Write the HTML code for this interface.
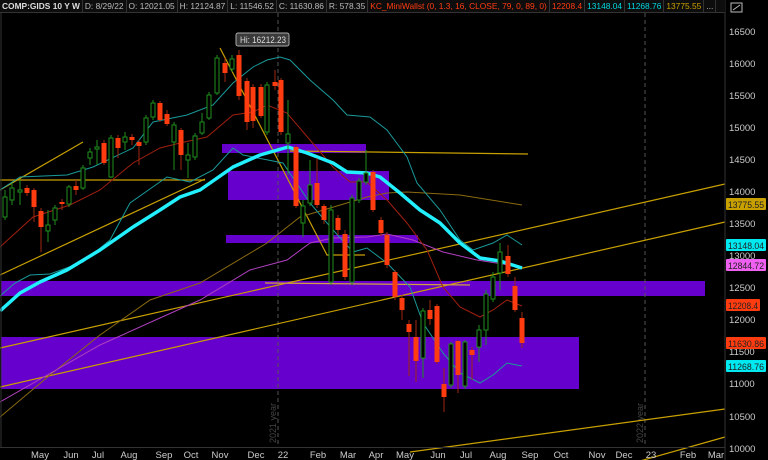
<!DOCTYPE html>
<html><head><meta charset="utf-8">
<style>
html,body{margin:0;padding:0;background:#000;width:768px;height:460px;overflow:hidden;font-family:"Liberation Sans",sans-serif;}
#hdr{position:absolute;left:0;top:0;height:12px;width:725px;overflow:hidden;background:#0d0d0d;border-bottom:1px solid #333;font-size:8.4px;line-height:12px;white-space:nowrap;color:#bbb;}
#hdr span{display:inline-block;padding:0 2px;border-right:1px solid #333;}
svg{position:absolute;left:0;top:0;}
</style></head><body>
<svg id="s" width="768" height="460" xmlns="http://www.w3.org/2000/svg" font-family="Liberation Sans, sans-serif">
<rect width="768" height="460" fill="#000"/>
<g fill="#6600cc">
<rect x="222" y="144" width="144" height="9"/>
<rect x="228" y="171" width="161" height="29"/>
<rect x="226" y="235" width="192" height="8"/>
<rect x="1" y="281" width="704" height="15"/>
<rect x="1" y="337" width="578" height="52"/>
</g>
<g stroke="#555" stroke-dasharray="4,3" stroke-width="1">
<line x1="278" y1="13" x2="278" y2="447"/>
<line x1="645" y1="13" x2="645" y2="447"/>
</g>
<text transform="translate(276,443) rotate(-90)" fill="#444" font-size="9">2021 year</text>
<text transform="translate(643,443) rotate(-90)" fill="#444" font-size="9">2022 year</text>
<g stroke="#c8a000" stroke-width="1.2" fill="none">
<line x1="0" y1="180" x2="205" y2="180"/>
<line x1="0" y1="190" x2="83" y2="142"/>
<line x1="0" y1="275" x2="205" y2="179"/>
<line x1="0" y1="348" x2="725" y2="184"/>
<line x1="0" y1="387" x2="725" y2="222"/>
<polyline points="220,48 327,255 365,255"/>
<line x1="290" y1="151" x2="528" y2="154"/>
<line x1="265" y1="283" x2="470" y2="285" stroke="#d0a040"/>
<line x1="410" y1="452" x2="725" y2="409"/>
<line x1="640" y1="461" x2="725" y2="437"/>
</g>
<polyline fill="none" stroke="#8a6a10" stroke-width="1" points="0,417 50,375 100,335 150,300 200,283 267,243 300,217 367,197 387,193 407,192 460,195 522,205"/>
<polyline fill="none" stroke="#b040c0" stroke-width="1" points="0,402 100,345 200,300 250,270 287,260 310,243 333,238 367,237 387,234 413,240 443,252 477,260 522,267"/>
<polyline fill="none" stroke="#a02010" stroke-width="1" points="0,247 33,217 70,205 100,190 133,163 160,148 180,143 207,137 233,115 253,112 267,105 287,113 310,140 333,167 350,182 367,182 387,200 407,223 427,250 443,287 460,307 480,317 493,310 507,300 522,306"/>
<polyline fill="none" stroke="#1a9a9a" stroke-width="1" points="0,190 20,177 67,175 93,167 133,148 153,122 187,115 213,105 233,83 253,67 267,60 280,57 290,60 310,80 333,100 347,115 370,117 387,130 407,157 417,183 440,210 460,240 473,250 493,243 507,235 522,245"/>
<polyline fill="none" stroke="#1a9a9a" stroke-width="1" points="0,296 15,283 30,275 50,274 83,262 110,240 130,203 167,177 190,182 213,170 233,148 243,155 283,163 310,203 333,230 353,252 367,248 387,263 410,287 423,323 443,353 460,373 480,383 493,375 507,363 522,366"/>
<polyline fill="none" stroke="#22f0ff" stroke-width="3.5" stroke-linejoin="round" points="0,311 20,293 40,282 67,270 100,250 133,227 160,210 180,197 200,190 233,167 260,155 288,147 307,153 333,163 347,172 367,173 380,177 400,193 420,210 440,223 460,243 480,258 500,261 522,268"/>
<g id="c"></g>
<line x1="1" y1="13" x2="1" y2="448" stroke="#333"/>
<line x1="725" y1="0" x2="725" y2="460" stroke="#333"/>
<line x1="0" y1="447.5" x2="725" y2="447.5" stroke="#333"/>
<g fill="#ccc" font-size="9.5">
<text x="729" y="35">16500</text><text x="729" y="67">16000</text><text x="729" y="99">15500</text>
<text x="729" y="131">15000</text><text x="729" y="163">14500</text><text x="729" y="195">14000</text>
<text x="729" y="227">13500</text><text x="729" y="259">13000</text><text x="729" y="291">12500</text>
<text x="729" y="323">12000</text><text x="729" y="355">11500</text><text x="729" y="387">11000</text>
<text x="729" y="420">10500</text><text x="729" y="452">10000</text>
</g>
<g font-size="9">
<rect x="726" y="198" width="40" height="12" fill="#c8a000" rx="1"/><text x="728" y="208" fill="#222" textLength="36" lengthAdjust="spacingAndGlyphs">13775.55</text>
<rect x="726" y="239" width="40" height="12" fill="#00e8f0" rx="1"/><text x="728" y="249" fill="#222" textLength="36" lengthAdjust="spacingAndGlyphs">13148.04</text>
<rect x="726" y="259" width="40" height="12" fill="#f060f0" rx="1"/><text x="728" y="269" fill="#222" textLength="36" lengthAdjust="spacingAndGlyphs">12844.72</text>
<rect x="726" y="299" width="34" height="12" fill="#ff3c10" rx="1"/><text x="728" y="309" fill="#222" textLength="30" lengthAdjust="spacingAndGlyphs">12208.4</text>
<rect x="726" y="337" width="40" height="12" fill="#ff3c10" rx="1"/><text x="728" y="347" fill="#222" textLength="36" lengthAdjust="spacingAndGlyphs">11630.86</text>
<rect x="726" y="360" width="40" height="12" fill="#00e8f0" rx="1"/><text x="728" y="370" fill="#222" textLength="36" lengthAdjust="spacingAndGlyphs">11268.76</text>
</g>
<g fill="#ccc" font-size="9.5" text-anchor="middle">
<text x="40" y="458">May</text><text x="71" y="458">Jun</text><text x="98" y="458">Jul</text><text x="129" y="458">Aug</text>
<text x="164" y="458">Sep</text><text x="191" y="458">Oct</text><text x="220" y="458">Nov</text><text x="256" y="458">Dec</text>
<text x="283" y="458">22</text><text x="318" y="458">Feb</text><text x="348" y="458">Mar</text><text x="376" y="458">Apr</text>
<text x="405" y="458">May</text><text x="438" y="458">Jun</text><text x="466" y="458">Jul</text><text x="498" y="458">Aug</text>
<text x="530" y="458">Sep</text><text x="561" y="458">Oct</text><text x="597" y="458">Nov</text><text x="624" y="458">Dec</text>
<text x="651" y="458">23</text><text x="688" y="458">Feb</text><text x="716" y="458">Mar</text>
</g>
<rect x="236" y="33" width="53" height="13" rx="2" fill="#3a3a3a" stroke="#aaa"/>
<text x="240" y="43" fill="#ddd" font-size="9" textLength="46" lengthAdjust="spacingAndGlyphs">Hi: 16212.23</text>
<g stroke="#bbb" fill="none" stroke-width="1"><rect x="731" y="3" width="11" height="9"/><line x1="733" y1="10" x2="740" y2="5"/></g>
</svg>
<div id="hdr"><span style="color:#ddd;font-weight:bold">COMP:GIDS 10 Y W</span><span>D: 8/29/22</span><span>O: 12021.05</span><span>H: 12124.87</span><span>L: 11546.52</span><span>C: 11630.86</span><span>R: 578.35</span><span style="color:#ff3c10">KC_MiniWallst (0, 1.3, 16, CLOSE, 79, 0, 89, 0)</span><span style="color:#ff3c10">12208.4</span><span style="color:#00d8e0">13148.04</span><span style="color:#00d8e0">11268.76</span><span style="color:#c8a000">13775.55</span><span>...</span></div>
<script>
var C=[[5,197,217,190,220,0],[12,188,200,183,205,0],[20,190,192,180,205,0],[27,188,193,185,196,1],[34,190,207,188,222,1],[41,211,227,208,252,1],[48,225,231,210,242,0],[55,208,220,205,225,0],[62,202,204,199,210,1],[69,187,204,185,207,0],[76,186,190,180,195,1],[83,168,188,165,190,0],[90,152,158,148,165,0],[97,147,149,140,165,0],[104,143,163,140,165,1],[111,138,177,135,178,0],[118,138,148,135,158,1],[125,137,142,132,150,0],[132,137,140,134,145,1],[139,142,146,140,165,1],[146,118,142,115,145,0],[153,103,117,100,120,0],[160,103,120,101,122,1],[167,114,124,110,126,1],[174,125,142,122,170,0],[181,130,155,128,170,1],[188,155,160,143,178,0],[195,136,157,133,160,0],[202,122,133,113,135,0],[209,95,118,92,120,0],[217,58,93,55,95,0],[225,63,73,58,82,1],[232,59,69,55,72,0],[239,55,96,50,100,1],[247,81,122,78,130,1],[253,87,121,84,128,1],[261,87,116,84,118,1],[267,85,132,82,135,0],[275,82,86,70,90,1],[281,80,132,78,135,1],[288,134,143,100,175,0],[296,147,206,145,208,1],[303,206,223,200,237,0],[310,185,203,160,206,0],[317,183,205,158,208,1],[324,206,220,204,224,1],[331,210,282,205,285,0],[338,218,230,215,235,1],[345,234,277,230,280,1],[352,198,282,195,285,0],[359,181,200,178,203,0],[366,173,182,150,185,0],[373,172,210,170,212,1],[381,220,233,217,236,1],[387,235,265,232,268,1],[395,272,297,270,300,1],[402,298,310,295,320,1],[409,324,332,320,376,1],[416,337,361,320,382,1],[423,311,358,308,378,0],[430,310,319,300,325,1],[437,306,362,304,364,1],[444,384,397,368,412,1],[451,344,385,342,388,0],[458,341,375,340,393,1],[465,342,386,340,389,0],[472,350,355,347,380,1],[479,330,347,325,362,0],[486,294,330,290,345,0],[493,277,299,272,302,0],[500,252,273,243,290,0],[508,256,274,245,277,1],[515,286,310,277,312,1],[522,318,343,312,348,1]];
var g=document.getElementById('c'),h='';
C.forEach(function(c){var col=c[5]?'#ff3c10':'#1f8f1f',wc=c[5]?'#a02810':'#1f8f1f';
h+='<line x1="'+c[0]+'" y1="'+c[3]+'" x2="'+c[0]+'" y2="'+c[4]+'" stroke="'+wc+'"/>';
if(c[5])h+='<rect x="'+(c[0]-2.5)+'" y="'+c[1]+'" width="5" height="'+Math.max(2,c[2]-c[1])+'" fill="'+col+'"/>';
else h+='<rect x="'+(c[0]-2)+'" y="'+c[1]+'" width="4" height="'+Math.max(2,c[2]-c[1])+'" fill="#000" stroke="'+col+'"/>';});
g.innerHTML=h;
</script>
</body></html>
